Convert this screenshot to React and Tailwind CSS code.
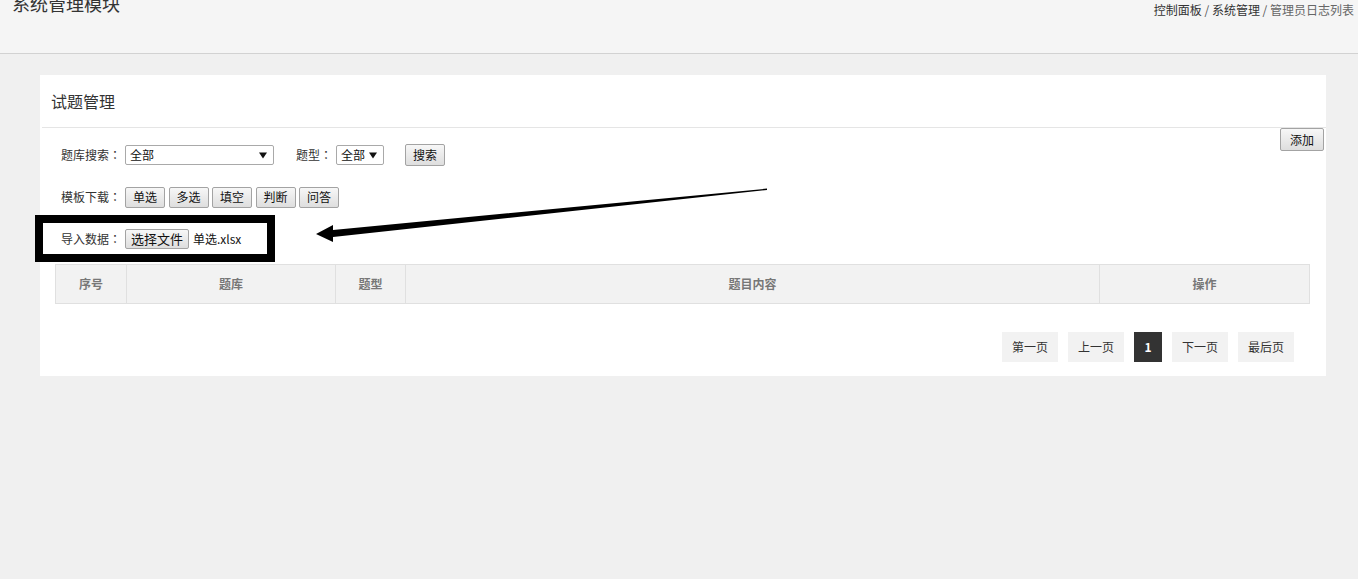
import React from 'react';

const Btn = ({ children, className = '' }) => (
  <button
    className={`inline-flex items-center justify-center border border-[#a3a3a3] rounded-[2px] bg-gradient-to-b from-[#f7f7f7] to-[#dedede] text-[12px] text-[#111] leading-none ${className}`}
  >
    {children}
  </button>
);

const Select = ({ value, className = '' }) => (
  <div
    className={`flex items-center justify-between h-[20px] border border-[#a9a9a9] rounded-[2px] bg-white pl-[4px] pr-[6px] text-[12px] text-[#111] ${className}`}
  >
    <span>{value}</span>
    <svg width="8" height="7" viewBox="0 0 8 7">
      <path d="M0 0.5 L8 0.5 L4 6.5 Z" fill="#111" />
    </svg>
  </div>
);

// full-width colon, centred like the original's
const Label = ({ text }) => (
  <span className="w-[64px]">
    {text}
    <span className="font-['Noto_Sans_CJK_TC']">：</span>
  </span>
);

const Arrow = () => (
  <svg
    className="absolute left-[270px] top-[105px] pointer-events-none"
    width="470"
    height="70"
    viewBox="0 0 470 70"
  >
    <polygon
      points="457,8.6 23,50 23,45 6,54 23,62 23,57 457,10"
      fill="#000"
    />
  </svg>
);

const cols = [
  { label: '序号', w: 'w-[70px]' },
  { label: '题库', w: 'w-[209px]' },
  { label: '题型', w: 'w-[70px]' },
  { label: '题目内容', w: 'flex-1' },
  { label: '操作', w: 'w-[210px]' },
];

const pages = ['第一页', '上一页', '1', '下一页', '最后页'];

export default function App() {
  return (
    <div className="min-h-[579px] bg-[#f0f0f0] font-['Noto_Sans_CJK_SC',sans-serif] text-[#333] overflow-hidden">
      {/* top bar */}
      <div className="h-[54px] bg-[#f5f5f5] border-b border-[#d2d2d2] flex justify-between items-start">
        <div className="pl-[12px] -mt-[6px] text-[18px] leading-[18px] text-[#333]">系统管理模块</div>
        <div className="pr-[4px] pt-[2px] text-[12px] leading-[16px]">
          <span className="text-[#333]">控制面板</span>
          <span className="text-[#555]"> / </span>
          <span className="text-[#333]">系统管理</span>
          <span className="text-[#555]"> / </span>
          <span className="text-[#666]">管理员日志列表</span>
        </div>
      </div>

      <div className="pt-[21px] pl-[40px] pr-[32px]">
        <div className="relative bg-white pb-[14px]">
          <div className="h-[53px] ml-[2px] border-b border-[#e5e5e5] flex items-center pl-[9px] text-[16px] text-[#333]">
            试题管理
          </div>

          <div className="flex">
            <div className="flex-1 pt-[16px]">
              {/* row 1 */}
              <div className="flex items-center h-[22px] pl-[21px] text-[12px]">
                <Label text="题库搜索" />
                <Select value="全部" className="w-[149px]" />
                <span className="ml-[22px] w-[40px]">
                  题型<span className="font-['Noto_Sans_CJK_TC']">：</span>
                </span>
                <Select value="全部" className="w-[48px]" />
                <Btn className="ml-[21px] w-[40px] h-[22px]">搜索</Btn>
              </div>

              {/* row 2 */}
              <div className="flex items-center h-[22px] mt-[20px] pl-[21px] text-[12px]">
                <Label text="模板下载" />
                <div className="flex gap-[3.5px]">
                  {['单选', '多选', '填空', '判断', '问答'].map((t) => (
                    <Btn key={t} className="w-[40px] h-[21px]">{t}</Btn>
                  ))}
                </div>
              </div>

              {/* import row */}
              <div className="relative h-[47px] mt-[7px] flex items-center pl-[21px] text-[12px]">
                <Label text="导入数据" />
                <Btn className="w-[64px] h-[20px] text-[13px]">选择文件</Btn>
                <span className="ml-[4px] text-[#111]">单选.xlsx</span>
                <div className="absolute -left-[5px] top-0 w-[240px] h-[47px] border-[8px] border-black"></div>
              </div>
            </div>
            <div className="pr-[2px] flex items-start">
              <Btn className="w-[44px] h-[23px]">添加</Btn>
            </div>
          </div>

          <Arrow />

          {/* table */}
          <div className="mt-[2px] ml-[15px] mr-[16px] h-[40px] flex border border-[#e0e0e0] bg-[#f2f2f2]">
            {cols.map((c, i) => (
              <div
                key={c.label}
                className={`${c.w} flex items-center justify-center text-[12px] font-bold text-[#777] ${i > 0 ? 'border-l border-[#e0e0e0]' : ''}`}
              >
                {c.label}
              </div>
            ))}
          </div>

          {/* pagination */}
          <div className="mt-[28px] pr-[32px] flex justify-end gap-[10px]">
            {pages.map((p) =>
              p === '1' ? (
                <div key={p} className="w-[28px] h-[30px] flex items-center justify-center bg-[#333] text-white text-[12px] font-bold">
                  {p}
                </div>
              ) : (
                <div key={p} className="w-[56px] h-[30px] flex items-center justify-center bg-[#f2f2f2] text-[#333] text-[12px]">
                  {p}
                </div>
              )
            )}
          </div>
        </div>
      </div>
    </div>
  );
}
